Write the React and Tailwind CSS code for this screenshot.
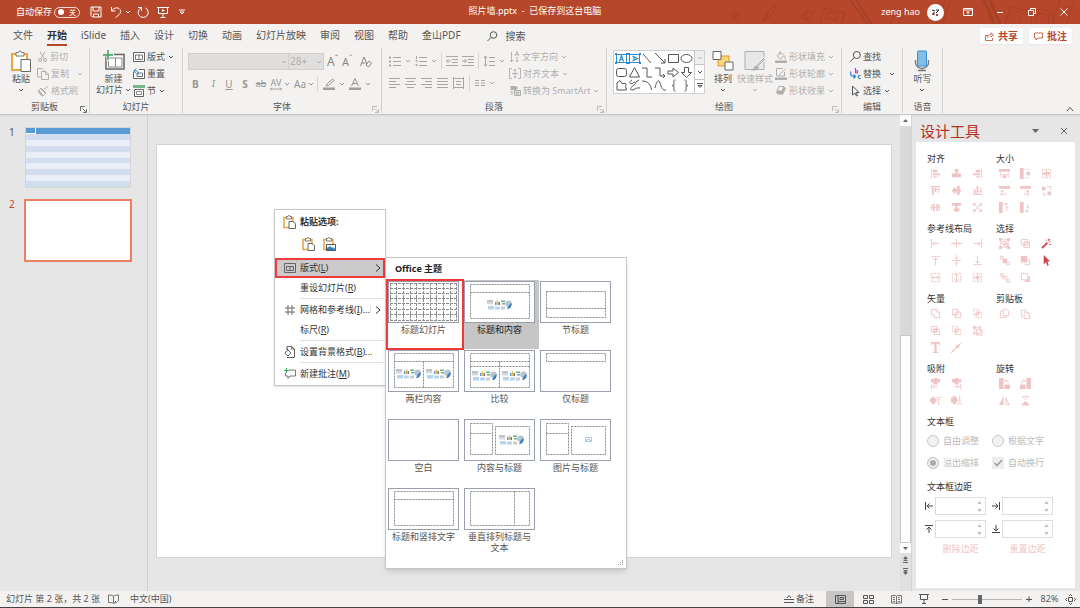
import { useState } from 'react';

// Small stroke-based svg wrapper shared by all the icons
function Ic({ w = 12, h = w, box, children, className = '' }) {
    return (
        <svg
            width={w}
            height={h}
            viewBox={box || `0 0 ${w} ${h}`}
            fill="none"
            stroke="currentColor"
            strokeWidth="1"
            className={`shrink-0 ${className}`}
            aria-hidden="true"
        >
            {children}
        </svg>
    );
}

const Chevron = ({ className = '' }) => (
    <Ic w={6} h={4} className={className}>
        <path d="M1 1l2 2 2-2" />
    </Ic>
);

const Divider = () => <span className="h-4 w-px shrink-0 bg-[#d8d6d4]" />;

/* ---------- title bar ---------- */

function Doodles() {
    return (
        <svg className="pointer-events-none absolute top-0 right-0" width="360" height="24" viewBox="0 0 360 24" fill="none" stroke="#a64027" strokeWidth="1" aria-hidden="true">
            <path d="M11 13l2 9M15 11v11M19 13l-2 9M10 13l4-2 5 2M12 16h6" />
            <path d="M43 22l3-7 7-10 3 2-7 10-6 5zM46 15l3 2" />
            <path d="M82 15l5-5 7 3-5 7-7-2zM87 10l-2 6 4 4" />
            <path d="M105 8l20 5-4 11M105 8l-5 14M109 12l9 2-2 6-9-2z" />
            <path d="M130 0l18 24M136 0l16 24" strokeWidth="2" />
            <path d="M170 24l4-8 9-12M178 24l8-13" />
            <path d="M216 24l9-24M222 24l9-24M214 8l14 5" />
            <path d="M264 0l10 24M270 0l10 24" strokeWidth="3" />
            <path d="M285 24l6-18 12 4-5 14M292 10l8 3" />
            <circle cx="322" cy="20" r="11" />
            <circle cx="322" cy="20" r="7" />
            <path d="M340 0l-8 24M354 0l-7 24M344 6l6 2M342 12l6 2" />
        </svg>
    );
}

function TitleBar() {
    const [autoSave, setAutoSave] = useState(false);
    return (
        <header className="relative flex h-6 items-center bg-[#b7472a] pl-4 text-[9px] text-white">
            <Doodles />
            <label htmlFor="autosave">自动保存</label>
            <button
                id="autosave"
                role="switch"
                aria-checked={autoSave}
                onClick={() => setAutoSave(!autoSave)}
                className="ml-0.5 flex h-[11px] w-[26px] items-center justify-between rounded-full border border-white/80 px-[3px] text-[7px] leading-none"
            >
                <span className="size-[6px] rounded-full bg-white" />
                {autoSave ? '开' : '关'}
            </button>
            <button aria-label="保存" className="ml-[10px]">
                <Ic w={12}>
                    <path d="M1 1h10v10H2.500L1 9.500zM3 1v4h6V1M3.500 11V8h5v3" />
                </Ic>
            </button>
            <button aria-label="撤消" className="ml-2 flex items-center gap-[3px]">
                <Ic w={12}>
                    <path d="M1.500 1v4h4M1.500 5C4 1.500 8 .8 10 3.500c2 3-1 5.500-4.500 8" />
                </Ic>
                <Chevron />
            </button>
            <button aria-label="恢复" className="ml-[6px]">
                <Ic w={12}>
                    <path d="M1 1.500h3.500V5M4.300 1.800A5 5 0 1 0 8.500 2" />
                </Ic>
            </button>
            <button aria-label="从头开始" className="ml-2">
                <Ic w={12}>
                    <path d="M0 1.500h12M1.500 1.500v6h9v-6M6 7.500V11M3.500 11.500h5" />
                    <path d="M5 3l3 1.500L5 6z" fill="currentColor" stroke="none" />
                </Ic>
            </button>
            <button aria-label="自定义快速访问工具栏" className="ml-[10px]">
                <Ic w={6}>
                    <path d="M0 1h6M1 3l2 2 2-2z" />
                </Ic>
            </button>
            <h1 className="pointer-events-none absolute inset-x-20 top-[5px] mr-[10px] text-center leading-3 font-normal">照片墙.pptx&nbsp; - &nbsp;已保存到这台电脑</h1>
            <div className="relative ml-auto flex items-center">
                <span className="text-[9px]">zeng hao</span>
                <span className="ml-[7px] flex size-[17px] items-center justify-center rounded-full bg-white">
                    <Ic w={9} className="text-[#333]">
                        <path d="M1 2l3 1M3 4l-1 3M5 2h3l-3 3M1 6h3" />
                        <path d="M5 6h2v2H5z" fill="#d8342a" stroke="none" />
                    </Ic>
                </span>
                <button aria-label="功能区显示选项" className="ml-[19px]">
                    <Ic w={10} h={8}>
                        <path d="M.5.5h9v7h-9zM.5 2h9M5 6.500V3.500M3.500 5L5 3.500 6.500 5" />
                    </Ic>
                </button>
                <button aria-label="最小化" className="ml-[23px]">
                    <Ic w={8}>
                        <path d="M1 4.500h6" />
                    </Ic>
                </button>
                <button aria-label="还原" className="ml-6">
                    <Ic w={8}>
                        <path d="M.5 2.500h5v5h-5zM2.500 2.500v-2h5v5h-2" />
                    </Ic>
                </button>
                <button aria-label="关闭" className="mr-3 ml-6">
                    <Ic w={8}>
                        <path d="M.5.5l7 7M7.500.5l-7 7" />
                    </Ic>
                </button>
            </div>
        </header>
    );
}

/* ---------- tabs ---------- */

const tabs = ['文件', '开始', 'iSlide', '插入', '设计', '切换', '动画', '幻灯片放映', '审阅', '视图', '帮助', '金山PDF'];

function TabBar() {
    const [active, setActive] = useState('开始');
    return (
        <nav className="flex h-6 items-center pr-2 pl-[13px] text-[10px] leading-[18px]">
            <div className="flex gap-[14px]">
                {tabs.map((tab) => (
                    <button
                        key={tab}
                        onClick={() => setActive(tab)}
                        className={`h-5 border-b-2 ${active === tab ? 'border-[#b7472a] font-bold text-[#333]' : 'border-transparent'}`}
                    >
                        {tab}
                    </button>
                ))}
            </div>
            <button className="ml-[26px] flex items-center gap-2">
                <Ic w={11}>
                    <circle cx="6.500" cy="4" r="3.300" />
                    <path d="M4 6.500L.5 10" />
                </Ic>
                搜索
            </button>
            <div className="ml-auto flex gap-[6px] font-bold text-[#b7472a]">
                <button className="flex h-4 items-center gap-1 rounded-xs bg-white px-[5px] shadow-xs">
                    <Ic w={9}>
                        <path d="M3 3.500H.5v5h7V6M2.500 6C3 3.500 4.500 2.500 6 2.500V.8L8.500 3 6 5V3.800" strokeWidth=".8" />
                    </Ic>
                    共享
                </button>
                <button className="flex h-4 items-center gap-1 rounded-xs bg-white px-[5px] shadow-xs">
                    <Ic w={9}>
                        <path d="M.5 1h8v5H4L2 8V6H.5z" strokeWidth=".8" />
                    </Ic>
                    批注
                </button>
            </div>
        </nav>
    );
}

/* ---------- ribbon ---------- */

function Group({ label, launcher, dim, className, children }) {
    return (
        <section className={`flex shrink-0 flex-col border-r border-[#d2d0ce] ${className}`}>
            <div className="flex h-[52px]">{children}</div>
            <div className="relative text-center leading-[13px]">
                {label}
                {launcher && (
                    <button aria-label={`${label}设置`} className={`absolute right-[2px] bottom-0 ${dim ? 'text-[#b1afad]' : ''}`}>
                        <Ic w={7}>
                            <path d="M.5 5V.5H5M2.500 2.500L6 6M6.500 3v3.500H3" strokeWidth=".8" />
                        </Ic>
                    </button>
                )}
            </div>
        </section>
    );
}

function Row({ icon, label, arrow, dim, wide }) {
    return (
        <button className={`flex h-[17px] items-center gap-[2px] whitespace-nowrap ${dim ? 'text-[#b1afad]' : ''}`}>
            {icon}
            {label}
            {arrow && <Chevron className={wide ? 'ml-[6px]' : 'ml-px'} />}
        </button>
    );
}

function Tool({ label, arrow, children }) {
    return (
        <button aria-label={label} className="flex h-4 items-center gap-1">
            {children}
            {arrow && <Chevron />}
        </button>
    );
}

function BigButton({ icon, label, dim, className = '' }) {
    return (
        <button className={`flex flex-col items-center leading-[11px] ${dim ? 'text-[#b1afad]' : ''} ${className}`}>
            {icon}
            <span className="mt-px">{label}</span>
            <Chevron className="mt-1" />
        </button>
    );
}

const pasteIcon = (
    <Ic w={22} h={22}>
        <path d="M2 4h15v16H2z" fill="#fff" stroke="#eda541" strokeWidth="2" />
        <path d="M6 2.500h2.500a1.500 1.500 0 0 1 3 0H14V6H6z" fill="#fff" stroke="#777" />
        <path d="M11 9.500h9.500v12H11z" fill="#fff" stroke="#666" />
    </Ic>
);

const newSlideIcon = (
    <Ic w={22} h={20}>
        <path d="M3 4.500h18v14.500H3z" fill="#fff" stroke="#666" strokeWidth="1.500" />
        <path d="M5.500 8h13.500M5.500 8v9H19V8M12.500 8v9" stroke="#888" />
        <path d="M5 0v11M0 5h11" stroke="#f3f2f1" strokeWidth="3" />
        <path d="M5 0v10M0 5h10" stroke="#3da35d" strokeWidth="1.500" />
    </Ic>
);

const arrangeIcon = (
    <Ic w={22} h={22}>
        <path d="M6 6h11v10H6z" fill="#f9d67a" stroke="#e8912d" />
        <path d="M1 1.500h8v8H1z" fill="#fff" stroke="#666" />
        <path d="M13 12h8v8h-8z" fill="#fff" stroke="#666" />
    </Ic>
);

const quickStyleIcon = (
    <Ic w={22} h={22}>
        <path d="M1 1.500h19v18H1z" fill="#e9e8e8" stroke="#b1afad" />
        <path d="M21 8l-9 9" stroke="#f3f2f1" strokeWidth="4" />
        <path d="M21 9l-7 7M20 8l-7 7" stroke="#a3a1a0" />
        <path d="M12 15l3 2c-1 4-5 4-8 3 3 0 3-4 5-5z" fill="#b1afad" stroke="none" />
    </Ic>
);

const micIcon = (
    <Ic w={16} h={22}>
        <path d="M1.500 10v3a6 5 0 0 0 13 0v-3M8 18v3M4 20.500h8" stroke="#777" strokeWidth="1.300" />
        <rect x="3.500" y="1" width="9" height="15" rx="1" fill="#83bdeb" stroke="#3a8ccb" />
    </Ic>
);

const icons = {
    cut: (
        <Ic w={11}>
            <path d="M3 .5l4 7M8 .5l-4 7" />
            <circle cx="3" cy="9" r="1.500" />
            <circle cx="8" cy="9" r="1.500" />
        </Ic>
    ),
    copy: (
        <Ic w={12}>
            <path d="M4 9H.5V.5H5L7 2.500M4.500 3.500H9l2.500 2.500v5.500h-7zM8.500 3.500v3h3" />
        </Ic>
    ),
    brush: (
        <Ic w={12}>
            <path d="M11 1L7 4.500M3.500 3.500l5 5M1 6l3-3 5 5-3 3z" />
            <path d="M1 6l2 .5 3 4.500-2-1z" fill="currentColor" />
        </Ic>
    ),
    layout: (
        <Ic w={12} h={10}>
            <path d="M.5.5h11v9H.5z" fill="#fff" stroke="#666" />
            <path d="M2.500 3h7v4.500h-7zM6 3v4.500" stroke="#777" />
        </Ic>
    ),
    reset: (
        <Ic w={12} h={11}>
            <path d="M.5 1.500h11v9H.5z" fill="#fff" stroke="#666" />
            <path d="M4 5h5.500v3.500H4z" stroke="#777" />
            <path d="M0 0h6v4H0z" fill="#f3f2f1" stroke="none" />
            <path d="M5 7c1-3-1-5-4-4M3 .5L.8 3 3 5.500" stroke="#2b83c6" />
        </Ic>
    ),
    section: (
        <Ic w={12} h={12}>
            <path d="M0 0h12v3H0z" fill="#72b987" stroke="none" />
            <path d="M1.500 4.500h9v7h-9z" fill="#fff" stroke="#666" />
            <path d="M3.500 6.500h5v3h-5z" stroke="#888" />
        </Ic>
    ),
    textDir: (
        <Ic w={11} h={12}>
            <path d="M2.500 1v10M1 9l1.500 2L4 9M8 11V6M6.500 9.500L8 11l1.500-1.500M6 5l2-4.500L10 5M6.700 3.500h2.600" strokeWidth=".9" />
        </Ic>
    ),
    alignText: (
        <Ic w={12} h={11}>
            <path d="M3 .5H.5v10H3M9 .5h2.500v10H9M6 1v9M4.500 2.500L6 1l1.500 1.500M4.500 8.500L6 10l1.500-1.500M3 5.500h6" strokeWidth=".9" />
        </Ic>
    ),
    smartArt: (
        <Ic w={12} h={11}>
            <path d="M1 1h6l2 2-2 2H1l1-2z" fill="currentColor" stroke="none" />
            <path d="M5.500 5.500h6v5h-6zM7 7.500h3M7 9h3" fill="#ddd" />
            <path d="M1 7h3M2 9h2" />
        </Ic>
    ),
    fill: (
        <Ic w={12} h={12}>
            <path d="M5.500 1L2 5l3.500 3L9 4.500zM5 0v4M9.500 5c1.500 2 .5 3 0 3" />
            <path d="M0 9.500h12V12H0z" fill="currentColor" stroke="none" />
        </Ic>
    ),
    outline: (
        <Ic w={12} h={12}>
            <path d="M8 .5H1.500V8h8V4M10.500 1L5 6l-1 1" />
            <path d="M0 9.500h12V12H0z" fill="currentColor" stroke="none" />
        </Ic>
    ),
    effect: (
        <Ic w={12} h={11}>
            <path d="M4 1.500h5l2 2-3 6H3L1 7.500z" fill="currentColor" stroke="none" />
            <path d="M4 1.500h5L7 6H2z" fill="#f3f2f1" />
        </Ic>
    ),
    find: (
        <Ic w={11}>
            <circle cx="6.800" cy="4" r="3.500" />
            <path d="M4.300 6.500L.5 10.500" />
        </Ic>
    ),
    replace: (
        <Ic w={11} h={12}>
            <path d="M5.500 0v5M5.500 3c3-1.500 3 2.500 0 2" stroke="#b146c2" strokeWidth="1.200" />
            <path d="M10.500 7.500c-3-1-3 3.500 0 3M1 3.500C0 7 1 8.500 5 8.500M3.500 6.500l2 2-2 2" stroke="#2b83c6" strokeWidth="1.200" />
        </Ic>
    ),
    select: (
        <Ic w={11} h={12}>
            <path d="M2.500 1v9L5 8l1.500 3 1-.5L6.200 7.500h2.800z" />
        </Ic>
    ),
};

const alignLines = [
    'M0 1.500h11M0 4.500h7M0 7.500h11M0 10.500h7',
    'M0 1.500h11M2 4.500h7M0 7.500h11M2 10.500h7',
    'M0 1.500h11M4 4.500h7M0 7.500h11M4 10.500h7',
    'M0 1.500h11M0 4.500h11M0 7.500h11M0 10.500h11',
    'M0 1.500h11M0 10.500h11M.5 0v12M10.500 0v12M3 4.500h5M3 7.500h5',
];

// outlines for the shape picker, every cell is 13 x 13
const shapes = [
    <path d="M2 2l8 9" />,
    <path d="M1 1l10 10M11 7v4H7" />,
    <path d="M1.500 2.500h10v8h-10z" />,
    <ellipse cx="6.500" cy="6.500" rx="5.500" ry="4" />,
    <rect x="1.500" y="2.500" width="10" height="8" rx="2" />,
    <path d="M6.500 1.500l5 9.500h-10z" />,
    <path d="M1 2h5v9h5" />,
    <path d="M1 2h5v8h5M9 8l2 2-2 2" />,
    <path d="M1 5h5V2l5.500 4.500L6 11V8H1z" />,
    <path d="M4.500 1.500h4v5h3l-5 5-5-5h3z" />,
    <path d="M2 11V4l3-2.500 2 3h3c2 0 1 2 .5 3l1 3.500z" />,
    <path d="M4 1C0 3 2 6 5 4s4 0 1 2-5 5-2 5 4-3 8-2M8 3l3-2" />,
    <path d="M1 2c6 0 9 4 9.500 9" />,
    <path d="M1 9c2-8 4-9 5-5s3 8 6 7" />,
    <path d="M8.500 1C6 1 7 3 7 5S5 6.500 5 6.500 7 6 7 8s-1 4 1.500 4" />,
    <path d="M4.500 1C7 1 6 3 6 5s2 1.500 2 1.500S6 6 6 8s1 4-1.500 4" />,
];

function TextShape({ vertical }) {
    return (
        <Ic w={13}>
            <path d="M1.500 2.500h10v8h-10z" stroke="#2b8ad0" />
            <path d={vertical ? 'M4.500 4l5 2.500-5 2.500M6 5v3' : 'M4.500 9.500l2-6 2 6M5 7.500h3'} stroke="#2b8ad0" strokeWidth="1.200" />
            <path d="M0 1h2v2H0zM11 1h2v2h-2zM0 10h2v2H0zM11 10h2v2h-2z" fill="#2b8ad0" stroke="none" />
        </Ic>
    );
}

function ShapeGallery() {
    return (
        <div className="mt-[2px] flex h-11 border border-[#d2d0ce] bg-white">
            <div className="grid grid-cols-6 px-px pt-px">
                <TextShape />
                <TextShape vertical />
                {shapes.map((shape, i) => (
                    <Ic key={i} w={13}>
                        {shape}
                    </Ic>
                ))}
            </div>
            <div className="flex w-[10px] flex-col divide-y divide-[#c8c6c4] border-l border-[#c8c6c4]">
                <button aria-label="上一行" className="flex flex-1 items-center justify-center bg-[#eee] text-[#bbb]">
                    <Ic w={6} h={4}>
                        <path d="M1 3l2-2 2 2" />
                    </Ic>
                </button>
                <button aria-label="下一行" className="flex flex-1 items-center justify-center">
                    <Chevron />
                </button>
                <button aria-label="其他" className="flex flex-1 items-center justify-center">
                    <Ic w={6} h={6}>
                        <path d="M0 .5h6M1 2.500l2 2 2-2z" />
                    </Ic>
                </button>
            </div>
        </div>
    );
}

function Ribbon() {
    return (
        <div className="relative z-10 flex h-[67px] border-b border-[#c8c6c4] pb-px shadow-xs">
            <Group label="剪贴板" launcher className="w-[90px]">
                <BigButton icon={pasteIcon} label="粘贴" className="ml-[10px] pt-[2px]" />
                <div className="ml-[5px] flex flex-col">
                    <Row dim icon={icons.cut} label="剪切" />
                    <Row dim icon={icons.copy} label="复制" arrow wide />
                    <Row dim icon={icons.brush} label="格式刷" />
                </div>
            </Group>
            <Group label="幻灯片" className="w-[93px]">
                <button className="ml-[6px] flex flex-col items-center pt-[2px] leading-[11px]">
                    {newSlideIcon}
                    <span className="mt-[3px]">新建</span>
                    <span className="flex items-center gap-[2px]">
                        幻灯片
                        <Chevron />
                    </span>
                </button>
                <div className="ml-[2px] flex flex-col">
                    <Row icon={icons.layout} label="版式" arrow />
                    <Row icon={icons.reset} label="重置" />
                    <Row icon={icons.section} label="节" arrow />
                </div>
            </Group>
            <Group label="字体" launcher dim className="w-[199px]">
                <div className="flex flex-col gap-[6px] pt-[5px] pl-[5px] text-[#b1afad]">
                    <div className="flex items-center">
                        <button aria-label="字体" className="flex h-[17px] w-[101px] items-center justify-end border border-[#d2d0ce] bg-[#e1dfdd] pr-px">
                            <Chevron />
                        </button>
                        <button aria-label="字号" className="-ml-px flex h-[17px] w-9 items-center justify-between border border-[#d2d0ce] bg-[#e1dfdd] px-px text-[10px]">
                            28+
                            <Chevron />
                        </button>
                        <button className="ml-[3px] flex text-[12px] leading-4 text-[#8a8886]">
                            A<span className="text-[8px] leading-[10px]">ˆ</span>
                        </button>
                        <button className="ml-1 flex text-[11px] leading-4 text-[#8a8886]">
                            A<span className="text-[8px] leading-[10px]">ˇ</span>
                        </button>
                        <span className="mx-1">
                            <Divider />
                        </span>
                        <button aria-label="清除格式" className="text-[#8a8886]">
                            <Ic w={12}>
                                <path d="M.5 10L4 1l3 7M2 7h3.500M6 9l3-4 2.500 2-3 4z" />
                            </Ic>
                        </button>
                    </div>
                    <div className="flex h-4 items-center pl-1 text-[10px] text-[#979593]">
                        <button className="w-[14px] text-left font-bold">B</button>
                        <button className="w-[15px] text-center font-serif italic">I</button>
                        <button className="w-4 text-center underline">U</button>
                        <button className="w-4 text-center font-bold">S</button>
                        <button className="w-4 text-center text-[9px] line-through">ab</button>
                        <button className="ml-px flex w-6 items-center gap-[2px]">
                            <span className="flex flex-col items-center text-[9px] leading-[9px]">
                                AV
                                <Ic w={12} h={4}>
                                    <path d="M0 2h12M2 .5L.5 2 2 3.500M10 .5L11.500 2 10 3.500" strokeWidth=".8" />
                                </Ic>
                            </span>
                            <Chevron />
                        </button>
                        <button className="flex w-[23px] items-center gap-[2px]">
                            Aa
                            <Chevron />
                        </button>
                        <Divider />
                        <span className="ml-[5px]">
                            <Tool label="文本突出显示颜色" arrow>
                                <Ic w={12}>
                                    <path d="M9.500 1L4 6l-1 2 2.500-.5L11 2.500z" />
                                    <path d="M0 9.500h12V12H0z" fill="#a19f9d" stroke="none" />
                                </Ic>
                            </Tool>
                        </span>
                        <span className="ml-1">
                            <Tool label="字体颜色" arrow>
                                <Ic w={12}>
                                    <path d="M2.500 8L6 .5 9.500 8M4 5.500h4" />
                                    <path d="M0 9.500h12V12H0z" fill="#a19f9d" stroke="none" />
                                </Ic>
                            </Tool>
                        </span>
                    </div>
                </div>
            </Group>
            <Group label="段落" launcher dim className="w-[225px]">
                <div className="flex w-[127px] flex-col gap-[6px] pt-[5px] pl-[7px] text-[#a8a6a4]">
                    <div className="flex items-center gap-1">
                        <Tool label="项目符号" arrow>
                            <Ic w={12}>
                                <path d="M4 2.500h8M4 6.500h8M4 10.500h8" />
                                <path d="M0 1.500h2v2H0zM0 5.500h2v2H0zM0 9.500h2v2H0z" fill="currentColor" stroke="none" />
                            </Ic>
                        </Tool>
                        <Tool label="编号" arrow>
                            <Ic w={12}>
                                <path d="M4 2.500h8M4 6.500h8M4 10.500h8M1.500 1v3M.5 5.500h1.500v2M.5 9.500h1.500v2" />
                            </Ic>
                        </Tool>
                        <Divider />
                        <Tool label="减少缩进量">
                            <Ic w={12}>
                                <path d="M0 1.500h12M0 10.500h12M6 4.500h6M6 7.500h6M5 6H.5M2.500 4L.5 6l2 2" />
                            </Ic>
                        </Tool>
                        <Tool label="增加缩进量">
                            <Ic w={12}>
                                <path d="M0 1.500h12M0 10.500h12M6 4.500h6M6 7.500h6M0 6h4.500M2.500 4l2 2-2 2" />
                            </Ic>
                        </Tool>
                        <Divider />
                        <Tool label="行距" arrow>
                            <Ic w={12}>
                                <path d="M6 2.500h6M6 6.500h6M6 10.500h6M2.500 1v10M.8 3l1.700-2 1.700 2M.8 9.500l1.700 1.500 1.700-1.500" />
                            </Ic>
                        </Tool>
                    </div>
                    <div className="flex h-4 items-center gap-[5px]">
                        {alignLines.map((d) => (
                            <Tool key={d} label="对齐">
                                <Ic w={11} h={12}>
                                    <path d={d} />
                                </Ic>
                            </Tool>
                        ))}
                        <Divider />
                        <Tool label="分栏" arrow>
                            <Ic w={10} h={8}>
                                <path d="M0 1.500h4M0 4h4M0 6.500h4M6 1.500h4M6 4h4M6 6.500h4" />
                            </Ic>
                        </Tool>
                    </div>
                </div>
                <div className="flex flex-col">
                    <Row dim icon={icons.textDir} label="文字方向" arrow />
                    <Row dim icon={icons.alignText} label="对齐文本" arrow />
                    <Row dim icon={icons.smartArt} label="转换为 SmartArt" arrow />
                </div>
            </Group>
            <Group label="绘图" launcher dim className="w-[235px]">
                <div className="pl-[6px]">
                    <ShapeGallery />
                </div>
                <BigButton icon={arrangeIcon} label="排列" className="ml-[7px] pt-[2px]" />
                <BigButton dim icon={quickStyleIcon} label="快速样式" className="ml-[3px] pt-[2px]" />
                <div className="ml-[2px] flex flex-col">
                    <Row dim icon={icons.fill} label="形状填充" arrow />
                    <Row dim icon={icons.outline} label="形状轮廓" arrow />
                    <Row dim icon={icons.effect} label="形状效果" arrow />
                </div>
            </Group>
            <Group label="编辑" className="w-[61px]">
                <div className="ml-2 flex flex-col">
                    <Row icon={icons.find} label="查找" />
                    <Row icon={icons.replace} label="替换" arrow wide />
                    <Row icon={icons.select} label="选择" arrow />
                </div>
            </Group>
            <Group label="语音" className="w-10">
                <BigButton icon={micIcon} label="听写" className="mx-auto pt-[2px]" />
            </Group>
            <button aria-label="折叠功能区" className="mr-[6px] mb-px ml-auto self-end">
                <Ic w={8} h={6}>
                    <path d="M1 5l3-3.500L7 5" />
                </Ic>
            </button>
        </div>
    );
}

/* ---------- slide list ---------- */

const stripes = [0, 1, 2, 3, 4, 5, 6, 7, 8];

function SlideList() {
    return (
        <aside className="w-[148px] shrink-0 border-r border-[#d0cecd] pt-3 pl-[9px] text-[10px]">
            <div className="flex items-start gap-[10px]">
                <span className="leading-[10px]">1</span>
                <button aria-label="幻灯片 1" className="flex h-[61px] w-[106px] flex-col border border-[#d6d6d6] bg-white">
                    <span className="flex h-[6px] w-full gap-px">
                        <span className="w-[9px] border-b border-white bg-[#5b9bd5]" />
                        <span className="flex-1 bg-[#5b9bd5]" />
                    </span>
                    {stripes.map((i) => (
                        <span key={i} className={`w-full flex-1 ${i % 2 ? 'bg-[#eaeff7]' : 'bg-[#d2deef]'}`} />
                    ))}
                </button>
            </div>
            <div className="mt-[11px] flex items-start gap-[9px]">
                <span className="leading-[10px] text-[#d24726]">2</span>
                <button aria-label="幻灯片 2" className="h-[63px] w-[108px] border-2 border-[#ee8062] bg-white" />
            </div>
        </aside>
    );
}

/* ---------- context menu and layout gallery ---------- */

function MenuItem({ icon, label, k, dots, arrow, split, className = 'h-5' }) {
    return (
        <button className={`flex w-full items-center text-left whitespace-nowrap ${className}`}>
            <span className="flex w-[25px] justify-center pl-1">{icon}</span>
            <span>
                {label}(<u>{k}</u>){dots && '...'}
            </span>
            {arrow && (
                <span className={`ml-auto pr-1 ${split ? 'border-l border-[#dcdcdc] pl-1' : ''}`}>
                    <Ic w={6} h={8}>
                        <path d="M1 .5L5 4 1 7.500" />
                    </Ic>
                </span>
            )}
        </button>
    );
}

const Line = () => <div className="mr-px ml-[25px] h-px bg-[#e1e1e1]" />;

function Clip({ image }) {
    return (
        <Ic w={13} h={14}>
            <path d="M1 2.500h9v10H1z" fill="#fff" stroke="#e8a33d" strokeWidth="1.500" />
            <path d="M3.500 1.500H5a1 1 0 0 1 2 0h1.500V4h-5z" fill="#fff" stroke="#777" />
            {image ? (
                <>
                    <path d="M3.500 7.500h9v6h-9z" fill="#fff" stroke="#555" />
                    <path d="M4 13V11l3-2 2 2 1-1 2 2v1z" fill="#2b83c6" stroke="none" />
                </>
            ) : (
                <path d="M6 6.500h4l2.500 2v5H6z" fill="#fff" stroke="#666" />
            )}
        </Ic>
    );
}

function ContextMenu() {
    return (
        <div className="absolute top-[94px] left-[126px] w-[112px] border border-[#c6c6c6] bg-white pb-px text-[9px] text-[#333] shadow-sm">
            <div className="flex h-6 items-center font-bold">
                <span className="flex w-[25px] justify-center pl-1">
                    <Clip />
                </span>
                粘贴选项:
            </div>
            <div className="flex h-6 gap-2 pt-[3px] pl-[27px]">
                <button aria-label="使用目标主题" className="self-start">
                    <Clip />
                </button>
                <button aria-label="图片" className="self-start">
                    <Clip image />
                </button>
            </div>
            <MenuItem
                icon={
                    <Ic w={12} h={10}>
                        <path d="M.5.5h11v9H.5zM2.500 3.500h7v4h-7zM6 3.500v4" stroke="#666" />
                    </Ic>
                }
                label="版式"
                k="L"
                arrow
                className="h-5 bg-[#cbcbcb] outline-2 -outline-offset-2 outline-[#f03a3a]"
            />
            <MenuItem label="重设幻灯片" k="R" />
            <Line />
            <MenuItem
                icon={
                    <Ic w={10}>
                        <path d="M3 0v10M7 0v10M0 3h10M0 7h10" stroke="#666" />
                    </Ic>
                }
                label="网格和参考线"
                k="I"
                dots
                arrow
                split
                className="h-[21px]"
            />
            <MenuItem label="标尺" k="R" />
            <Line />
            <MenuItem
                icon={
                    <Ic w={11} h={12}>
                        <path d="M3 4V.5h4.500L10.500 3v8.500H3M7.500.5V3h3M4 4L.8 7 4 10l3-3zM4 4l-1-2" stroke="#666" />
                    </Ic>
                }
                label="设置背景格式"
                k="B"
                dots
                className="h-[21px]"
            />
            <Line />
            <MenuItem
                icon={
                    <Ic w={12} h={11}>
                        <path d="M5 2h6.500v6H6l-2 2.500V8H1.500V5" stroke="#777" />
                        <path d="M2.500 0v5M0 2.500h5" stroke="#3da35d" />
                    </Ic>
                }
                label="新建批注"
                k="M"
                className="h-[21px]"
            />
        </div>
    );
}

// Cluster of the insert-content glyphs inside a placeholder
function Content({ x, y }) {
    return (
        <g transform={`translate(${x} ${y})`} stroke="none">
            <path d="M0 .5h6v4H0z" fill="#d5d8dc" />
            <path d="M0 .5h6v1H0z" fill="#9aa3ad" />
            <path d="M8 2h1.500v3H8z" fill="#5b9bd5" />
            <path d="M9.700.5h1.600V5H9.700z" fill="#eab54c" />
            <path d="M11.500 2H13v3h-1.500z" fill="#777" />
            <path d="M14 .5h4v1.500h-4zM15 3h3v1.500h-3z" fill="#6bb08c" />
            <path d="M1 6h6v3.500H1zM8 6.500h5v3H8z" fill="#b9d5ee" />
            <path d="M14 6.500h4v3h-4z" fill="#ccc" />
            <circle cx="21.500" cy="3.800" r="3.300" fill="#b8c4d0" />
            <path d="M20 9c3 0 5-2 4.500-6L22 5z" fill="#3e7fc4" />
        </g>
    );
}

const tableLines = 'M2 2.500h67M2 7.500h67M2 12.500h67M2 17.500h67M2 22.500h67M2 28.500h67M2 33.500h67M2 39.500h67M2.500 2v38M8.500 2v38M15.500 2v38M22.500 2v38M28.500 2v38M35.500 2v38M42.500 2v38M48.500 2v38M55.500 2v38M62.500 2v38M68.500 2v38';

const layouts = [
    { name: '标题幻灯片', d: tableLines, dash: '3 1' },
    { name: '标题和内容', d: 'M6.500 3.500h59v34h-59zM6.500 11.500h59', at: [[23, 19]] },
    { name: '节标题', d: 'M6.500 10.500h59v26h-59zM6.500 27.500h59' },
    { name: '两栏内容', d: 'M6.500 3.500h59v34h-59zM6.500 11.500h59M35.500 11.500v26', at: [[8, 19], [38, 19]] },
    { name: '比较', d: 'M6.500 3.500h59v34h-59zM6.500 11.500h59M6.500 16.500h59M35.500 11.500v26', at: [[8, 21], [38, 21]] },
    { name: '仅标题', d: 'M6.500 3.500h59v8h-59z' },
    { name: '空白', d: '' },
    { name: '内容与标题', d: 'M6.500 4.500h22v31h-22zM6.500 14.500h22M31.500 7.500h34v28h-34z', at: [[35, 16]] },
    { name: '图片与标题', d: 'M6.500 4.500h22v31h-22zM6.500 14.500h22M31.500 7.500h34v28h-34z', picture: true },
    { name: '标题和竖排文字', d: 'M6.500 3.500h59v34h-59zM6.500 11.500h59' },
    { name: '垂直排列标题与文本', d: 'M6.500 3.500h59v34h-59zM50.500 3.500v34' },
];

function LayoutGallery() {
    const [current, setCurrent] = useState('标题和内容');
    return (
        <div className="absolute top-[142px] left-[237px] w-[242px] border border-[#c6c6c6] bg-white pb-3 pl-px text-[9px] shadow-md">
            <h2 className="pl-2 leading-[22px] font-bold text-[#222]">Office 主题</h2>
            <div className="grid grid-cols-[repeat(3,76px)]">
                {layouts.map((l, i) => (
                    <button
                        key={l.name}
                        onClick={() => setCurrent(l.name)}
                        className={`flex min-h-[69px] flex-col items-start px-px pt-px leading-[11px] ${current === l.name ? 'bg-[#c6c6c6] text-[#222]' : ''} ${i === 0 ? 'relative z-10 outline-2 -outline-offset-1 outline-[#f03a3a]' : ''}`}
                    >
                        <svg width="71" height="42" viewBox="0 0 71 42" fill="none" aria-hidden="true">
                            <rect x=".5" y=".5" width="70" height="41" fill="#fff" stroke="#9a9fae" />
                            <path d={l.d} stroke="#8c8c8c" strokeDasharray={l.dash || '2 1'} />
                            {(l.at || []).map(([x, y]) => (
                                <Content key={x} x={x} y={y} />
                            ))}
                            {l.picture && <path d="M38.500 18.500h6v4h-6zM39 22l2-2 2 1 1 1" stroke="#a9c4de" transform="translate(7 0)" />}
                        </svg>
                        <span className="w-[71px] pt-px">{l.name}</span>
                    </button>
                ))}
            </div>
            <svg className="absolute right-[2px] bottom-[2px]" width="6" height="6" viewBox="0 0 6 6" fill="#999" aria-hidden="true">
                <path d="M4 0h1v1H4zM2 2h1v1H2zM4 2h1v1H4zM0 4h1v1H0zM2 4h1v1H2zM4 4h1v1H4z" />
            </svg>
        </div>
    );
}

/* ---------- editor ---------- */

function Editor() {
    return (
        <main className="relative flex min-w-0 flex-1">
            <div className="min-w-0 flex-1 px-2 pt-[29px]">
                <div className="aspect-video w-full border border-[#d4d4d4] bg-white" />
            </div>
            <div className="flex w-[11px] shrink-0 flex-col items-center bg-[#e0e0e0] pb-4 text-[#666]">
                <button aria-label="向上滚动" className="flex h-[11px] w-full items-center justify-center bg-white">
                    <Ic w={5} h={3}>
                        <path d="M0 3l2.500-3L5 3z" fill="currentColor" stroke="none" />
                    </Ic>
                </button>
                <div className="flex w-full flex-1 flex-col justify-end bg-[#d9d9d9]">
                    <div className="h-1/2 w-full border border-[#c8c8c8] bg-white" />
                </div>
                <button aria-label="向下滚动" className="flex h-[10px] w-full items-center justify-center bg-white">
                    <Ic w={5} h={3}>
                        <path d="M0 0l2.500 3L5 0z" fill="currentColor" stroke="none" />
                    </Ic>
                </button>
                <button aria-label="上一张幻灯片" className="mt-[3px]">
                    <Ic w={7}>
                        <path d="M3.500 0L6 3H1zM3.500 3L6 5H1z" fill="currentColor" stroke="none" />
                        <path d="M1 6.500h5" />
                    </Ic>
                </button>
                <button aria-label="下一张幻灯片" className="mt-[5px]">
                    <Ic w={7}>
                        <path d="M3.500 7L6 4H1zM3.500 4.500L6 2H1z" fill="currentColor" stroke="none" />
                        <path d="M1 .5h5" />
                    </Ic>
                </button>
            </div>
            <ContextMenu />
            <LayoutGallery />
        </main>
    );
}

/* ---------- design tools pane ---------- */

const F = ({ d }) => <path d={d} fill="currentColor" stroke="none" />;

// null keeps a cell of the three column grid empty
const paneGroups = [
    {
        title: '对齐',
        items: [
            <><F d="M1 1h1v10H1zM3 2h5v3H3zM3 6h8v2H3z" /><path d="M4 9.500h4M5.500 8.500l-1.500 1 1.500 1" /></>,
            <F d="M4 1h4v3H4zM5 4h2v2H5zM1 6h10v4H1z" />,
            <><F d="M10 1h1v10h-1zM4 2h5v3H4zM1 6h8v2H1z" /><path d="M4 9.500h4M6.500 8.500l1.500 1-1.500 1" /></>,
            <><F d="M1 1h10v1.500H1zM2 3h2v8H2zM5 3h2v5H5z" /><path d="M9.500 9V4M8 5.500L9.500 4 11 5.500" /></>,
            <F d="M1 5h10v2H1zM2.500 3h3v6h-3zM6.500 1h3v10h-3z" />,
            <><F d="M1 9.500h10V11H1zM2 5h2v4H2zM5 1h2v8H5z" /><path d="M9.500 3v5M8 6.500L9.500 8 11 6.500" /></>,
            <><F d="M1 3h1v6H1zM3 2h2v8H3zM7 2h2v8H7zM10 3h1v6h-1z" /><path d="M1 6h10" /></>,
            <><F d="M1 1h10v3H1zM3 7h6v3H3z" /><path d="M6 1v10" strokeWidth="2" /></>,
            <path d="M1.500 1.500h2v2h-2zM8.500 1.500h2v2h-2zM1.500 8.500h2v2h-2zM8.500 8.500h2v2h-2zM3.500 3.500l5 5M8.500 3.500l-5 5" />,
        ],
    },
    {
        title: '大小',
        items: [
            <><F d="M0 1h12v3H0zM4 8h4v3H4z" /><path d="M1.500 5v6M10.500 5v6M2 7h8" strokeDasharray="2 1" /></>,
            <><F d="M0 0h4v12H0zM7 4h4v4H7z" /><path d="M5 1.500h6M5 10.500h6" strokeDasharray="2 1" /></>,
            <><path d="M1.500 1.500h9v9h-9z" strokeDasharray="2 1" /><F d="M3 4h2v4H3zM7 4h2v4H7z" /><path d="M6 1v10M1 6h10" /></>,
            <><F d="M0 1h12v3H0zM2 6h3v2H2z" /><path d="M2 10h6M3.500 8.500L2 10l1.500 1.500" /></>,
            <><F d="M0 1h12v3H0zM7 6h3v2H7z" /><path d="M4 10h6M8.500 8.500L10 10l-1.500 1.500" /></>,
            <><F d="M1 2h4v4H1zM7 7h4v4H7z" /><path d="M6.500 1.500h4v4M5.500 10.500H2.500V8" /></>,
            <><F d="M0 0h4v12H0zM6 1h3v2H6z" /><path d="M8.500 10V5M7 6.500L8.500 5 10 6.500" /></>,
            <><F d="M0 0h4v12H0zM6 9h3v2H6z" /><path d="M8.500 2v5M7 5.500L8.500 7 10 5.500" /></>,
        ],
    },
    {
        title: '参考线布局',
        items: [
            <path d="M1.500 1v10M3 6h7M5.500 3.500L3 6l2.500 2.500" />,
            <path d="M6 1v10M0 6h4.500M7.500 6H12M3 4.500L4.500 6 3 7.500M9 4.500L7.500 6 9 7.500" />,
            <path d="M10.500 1v10M9 6H2M6.500 3.500L9 6 6.500 8.500" />,
            <path d="M1 1.500h10M6 3v8M3.500 5.500L6 3l2.500 2.500" />,
            <path d="M1 6h10M6 0v4.500M6 7.500V12M4.500 3L6 4.500 7.500 3M4.500 9L6 7.500 7.500 9" />,
            <path d="M1 10.500h10M6 1v8M3.500 6.500L6 9l2.500-2.500" />,
            <><path d="M1.500 1.500h9v9h-9z" strokeDasharray="2 1" /><path d="M2 6h8M4 4L2 6l2 2M8 4l2 2-2 2" /></>,
            <><path d="M1.500 1.500h9v9h-9z" strokeDasharray="2 1" /><path d="M6 2v8M4 4l2-2 2 2M4 8l2 2 2-2" /></>,
            <><path d="M1.500 1.500h9v9h-9z" strokeDasharray="2 1" /><path d="M2 6h8M6 2v8M4 4l4 4M8 4L4 8" /></>,
        ],
    },
    {
        title: '选择',
        items: [
            <><path d="M2 2h8v8H2zM4 4h4v3H4zM6 6h3v3H6z" /><F d="M0 0h3v3H0zM9 0h3v3H9zM0 9h3v3H0zM9 9h3v3H9z" /></>,
            <path d="M1.500 1.500h7v6h-7zM4.500 4.500h6v6h-6zM4.500 4.500h4v3h-4z" />,
            <g stroke="#cc4444"><path d="M1 11l6-6" strokeWidth="2" /><path d="M8 1v2M10.500 3.500L9 5M11 7H9M5 2l1 1M10 1L8.500 3" /></g>,
            <><F d="M4 4h5v5H4z" /><path d="M1.500 1.500h3v3h-3zM8.500 7.500h3v3h-3z" /></>,
            <><F d="M1 1h7v7H1z" /><path d="M8.500 5.500h2v5h-5v-2" /></>,
            <path d="M3 0l7 7H7l1.500 4L7 12 5.500 8 3 10z" fill="#cc4444" stroke="none" />,
            <path d="M1.500 1.500h3v3h-3zM5.500 4.500h3v3h-3zM8.500 8.500h3v3h-3zM4.500 7.500h-1v-3" />,
            <><path d="M1.500 1.500h7v7h-7z" /><F d="M9 5h2v6H5V9h4z" /></>,
        ],
    },
    {
        title: '矢量',
        items: [
            <path d="M1.500 1.500h6v3h3v6h-6v-3h-3z" />,
            <path d="M1.500 1.500h6v6h-6zM4.500 4.500h6v6h-6z" />,
            <><path d="M1.500 1.500h6v6h-6zM4.500 4.500h6v6h-6z" strokeDasharray="2 1" /><path d="M4.500 4.500h3v3h-3z" /></>,
            <><path d="M1.500 1.500h6v6h-6z" /><path d="M4.500 4.500h6v6h-6z" /><path d="M4.500 4.500h3v3h-3z" strokeWidth="1.500" /></>,
            <><path d="M1.500 1.500h6v6h-6z" strokeDasharray="2 1" /><path d="M4.500 4.500h6v6h-6z" strokeDasharray="2 1" /><path d="M4.500 4.500h3v3h-3z" /></>,
            <><path d="M3 3h6v6H3zM5 5h6v6H5z" /><F d="M1 1h3v3H1zM8 1h2v2H8zM1 8h2v2H1z" /></>,
            <F d="M1 0h10v3.500h-1L9.500 2H7.200v8.500l1.800.5v1H3v-1l1.800-.5V2H2.500L2 3.500H1z" />,
            <><F d="M12 0L6 4 4 8l4-2zM1 9l4-2-2 4z" /><path d="M0 12l8-8M5 3l4 4" /></>,
        ],
    },
    {
        title: '剪贴板',
        items: [
            <path d="M4.500 1.500h4l2 2v5h-6zM4.500 3.500h-3v7h6v-2" />,
            <path d="M3.500 9.500h-2v-7h5l1 1M4.500 4.500h4l2 2v5h-6zM8.500 4.500v2h2" />,
        ],
    },
    {
        title: '吸附',
        items: [
            <><F d="M4 0h4v1h3v4H8v2H4V5H1V1h3z" /><path d="M3 9.500h5M5 8L3 9.500 5 11M1.500 7v5" /></>,
            <><F d="M4 0h4v1h3v4H8v2H4V5H1V1h3z" /><path d="M4 9.500h5M7 8l2 1.500L7 11M10.500 7v5" /></>,
            null,
            <><F d="M2 2h3v2h2v4H5v2H2V8H0V4h2z" /><path d="M9.500 11V4M8 6l1.500-2L11 6M7 2.500h5" /></>,
            <><F d="M2 1h3v2h2v5H5v2H2V8H0V3h2z" /><path d="M9.500 1v6M8 5l1.500 2L11 5M7 9.500h5" /></>,
        ],
    },
    {
        title: '旋转',
        items: [
            <><F d="M0 0h5v12H0zM6 7h6v5H6z" /><path d="M7 3h1.500c1.500 0 1.500 1 1.500 3M8 1.500L6.500 3 8 4.500" /></>,
            <><F d="M7 0h5v12H7zM0 7h6v5H0z" /><path d="M5 3H3.500C2 3 2 4 2 6M4 1.500L5.500 3 4 4.500" /></>,
            null,
            <><F d="M5 1v10H0z" /><path d="M7.500 3l3.500 7.500H7.500z" /></>,
            <><path d="M2.500 1.500h7L6 5z" /><F d="M6 6.500l5 5H1z" /></>,
        ],
    },
];

function PaneGroup({ title, items }) {
    return (
        <section className="w-[69px]">
            <h3 className="pl-[2px] leading-[13px]">{title}</h3>
            <div className="grid w-[63px] grid-cols-3 text-[#f0c4c4]">
                {items.map((item, i) =>
                    item ? (
                        <button key={i} aria-label={`${title} ${i + 1}`} className="flex h-[17px] items-center justify-center">
                            <Ic w={11} box="0 0 12 12">
                                {item}
                            </Ic>
                        </button>
                    ) : (
                        <span key={i} />
                    )
                )}
            </div>
        </section>
    );
}

function Choice({ id, type, name, label, checked }) {
    return (
        <div className="flex items-center gap-1">
            <span className="relative flex">
                <input
                    id={id}
                    type={type}
                    name={name}
                    defaultChecked={checked}
                    className={
                        type === 'radio'
                            ? 'size-3 appearance-none rounded-full border border-[#c8c8c8] bg-[#f2f2f2] checked:bg-[#aaa] checked:shadow-[inset_0_0_0_2px_#f2f2f2]'
                            : 'peer size-3 appearance-none bg-[#eee]'
                    }
                />
                {type === 'checkbox' && (
                    <Ic w={12} className="pointer-events-none invisible absolute inset-0 text-[#999] peer-checked:visible">
                        <path d="M2.500 6l2.500 2.500 5-5.500" strokeWidth="1.500" />
                    </Ic>
                )}
            </span>
            <label htmlFor={id} className="text-[#bbb]">
                {label}
            </label>
        </div>
    );
}

function Spin({ label, d }) {
    return (
        <div className="flex items-center">
            <Ic w={10} className="text-[#444]">
                <path d={d} />
            </Ic>
            <div className="ml-px flex h-[18px] w-[51px] items-center border border-[#ddd] bg-white pr-[3px]">
                <input type="text" aria-label={label} className="h-full min-w-0 flex-1 px-1 outline-none" />
                <Ic w={5} h={13} className="text-[#bbb]">
                    <path d="M.5 4l2-3 2 3zM.5 9l2 3 2-3z" fill="currentColor" stroke="none" />
                </Ic>
            </div>
        </div>
    );
}

function DesignPane() {
    return (
        <aside className="flex w-[169px] shrink-0 flex-col border-l border-[#d6d4d3] pr-[5px] pb-[3px] pl-1 text-[9px] text-[#333]">
            <div className="flex h-[27px] items-center pt-1 pl-1">
                <h2 className="text-[15px] leading-5 text-[#b5301f]">设计工具</h2>
                <button aria-label="窗格选项" className="ml-auto text-[#666]">
                    <Ic w={7} h={4}>
                        <path d="M0 0h7L3.500 4z" fill="currentColor" stroke="none" />
                    </Ic>
                </button>
                <button aria-label="关闭窗格" className="mr-[7px] ml-[21px] text-[#666]">
                    <Ic w={8}>
                        <path d="M1 1l6 6M7 1L1 7" />
                    </Ic>
                </button>
            </div>
            <div className="flex-1 bg-white pt-[10px] pl-[9px]">
                <div className="flex flex-wrap gap-y-[6px]">
                    {paneGroups.map((g) => (
                        <PaneGroup key={g.title} {...g} />
                    ))}
                </div>
                <h3 className="mt-[6px] pl-[2px] leading-[13px]">文本框</h3>
                <div className="mt-[6px] grid grid-cols-[65px_65px] gap-y-[9px] pl-[2px] leading-[13px] whitespace-nowrap">
                    <Choice id="fit-free" type="radio" name="fit" label="自由调整" />
                    <Choice id="fit-text" type="radio" name="fit" label="根据文字" />
                    <Choice id="fit-overflow" type="radio" name="fit" label="溢出缩排" checked />
                    <Choice id="wrap" type="checkbox" label="自动换行" checked />
                </div>
                <h3 className="mt-[11px] pl-[2px] leading-[13px]">文本框边距</h3>
                <div className="mt-1 -ml-px grid grid-cols-[67px_67px] gap-y-[5px]">
                    <Spin label="左边距" d="M1.500 1v8M3 5h6M5.500 2.500L3 5l2.500 2.500" />
                    <Spin label="右边距" d="M8.500 1v8M7 5H1M4.500 2.500L7 5 4.500 7.500" />
                    <Spin label="上边距" d="M1 1.500h8M5 3v6M2.500 5.500L5 3l2.500 2.500" />
                    <Spin label="下边距" d="M1 8.500h8M5 7V1M2.500 4.500L5 7l2.500-2.500" />
                </div>
                <div className="mt-1 grid grid-cols-[67px_67px] pl-[2px] text-center text-[#efc6c6]">
                    <button>删除边距</button>
                    <button>重置边距</button>
                </div>
            </div>
        </aside>
    );
}

/* ---------- status bar ---------- */

function StatusBar() {
    const [zoom, setZoom] = useState(40);
    return (
        <footer className="flex h-[17px] items-center border-b border-[#444] bg-[#f3f2f1] pr-1 pl-[6px] text-[9px]">
            <span>幻灯片 第 2 张，共 2 张</span>
            <button aria-label="拼写检查" className="ml-2">
                <Ic w={11} h={10}>
                    <path d="M5.500 2C4 1 2 1 .5 1v7.500c2 0 3.500 0 5 1 1-.8 2-1 3-1M5.500 2v7M5.500 2c1.500-1 3.500-1 5-1v5M7 7l1.500 1.500L11 6" strokeWidth=".8" />
                </Ic>
            </button>
            <button className="ml-[11px]">中文(中国)</button>
            <div className="ml-auto flex h-full items-center">
                <button className="mr-3 flex items-center gap-[2px]">
                    <Ic w={10}>
                        <path d="M0 5.500h10M0 8.500h10M3 4l2-2.500L7 4" />
                    </Ic>
                    备注
                </button>
                <button aria-label="普通视图" className="flex h-full w-7 items-center justify-center bg-[#c8c6c4]">
                    <Ic w={11} h={9}>
                        <path d="M.5.5h10v8H.5zM3 .5v8M3 6.500h7.500M5 2.500h3.500v2H5z" />
                    </Ic>
                </button>
                <button aria-label="幻灯片浏览" className="flex w-7 justify-center">
                    <Ic w={11} h={9}>
                        <path d="M.5.5h4v3h-4zM6.500.5h4v3h-4zM.5 5.500h4v3h-4zM6.500 5.500h4v3h-4z" />
                    </Ic>
                </button>
                <button aria-label="阅读视图" className="flex w-7 justify-center">
                    <Ic w={11} h={9}>
                        <path d="M.5.5h4l1 1 1-1h4V8h-4l-1 1-1-1h-4zM5.500 1.500V9M2 2.500h2M2 4.500h2M7 2.500h2M7 4.500h2M2 6.500h2M7 6.500h2" strokeWidth=".8" />
                    </Ic>
                </button>
                <button aria-label="幻灯片放映" className="flex w-7 justify-center">
                    <Ic w={10} h={10}>
                        <path d="M0 .5h10M1.500.5v5h7v-5M5 5.500V9M3 9.500h4" />
                    </Ic>
                </button>
                <button aria-label="缩小" className="ml-1">
                    <Ic w={6}>
                        <path d="M0 3.500h6" />
                    </Ic>
                </button>
                <input
                    type="range"
                    aria-label="缩放"
                    value={zoom}
                    onChange={(e) => setZoom(e.target.value)}
                    className="mx-1 h-px w-[70px] appearance-none bg-[#b8b6b4] [&::-webkit-slider-thumb]:h-[9px] [&::-webkit-slider-thumb]:w-1 [&::-webkit-slider-thumb]:appearance-none [&::-webkit-slider-thumb]:bg-[#666]"
                />
                <button aria-label="放大">
                    <Ic w={6}>
                        <path d="M0 3.500h6M3 .5v6" />
                    </Ic>
                </button>
                <button className="ml-2 w-[19px]">82%</button>
                <button aria-label="适应窗口" className="ml-[6px]">
                    <Ic w={11}>
                        <path d="M3.500 3.500h4v4h-4zM4 2l1.500-1.500L7 2M4 9l1.500 1.500L7 9M2 4L.5 5.500 2 7M9 4l1.500 1.500L9 7" />
                    </Ic>
                </button>
            </div>
        </footer>
    );
}

export default function App() {
    return (
        <div className="flex h-screen flex-col overflow-hidden bg-[#e6e6e6] font-['Noto_Sans','Noto_Sans_CJK_SC',sans-serif] text-[#555]">
            <TitleBar />
            <div className="bg-[#f3f2f1] text-[9px] text-[#555]">
                <TabBar />
                <Ribbon />
            </div>
            <div className="flex min-h-0 flex-1">
                <SlideList />
                <Editor />
                <DesignPane />
            </div>
            <StatusBar />
        </div>
    );
}
